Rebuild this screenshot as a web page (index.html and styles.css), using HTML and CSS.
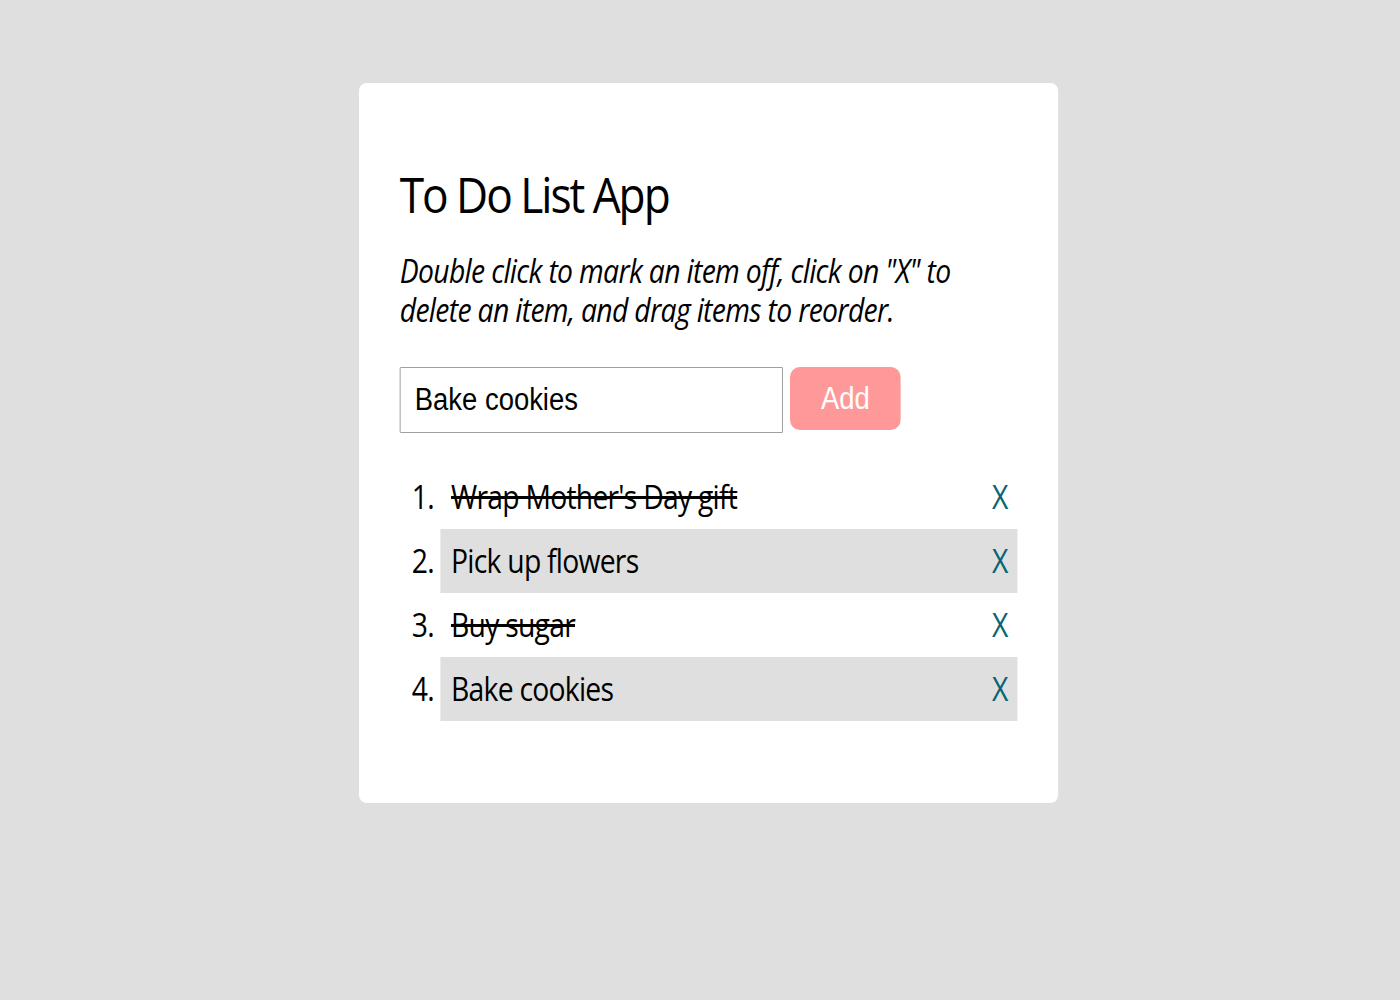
FILE: index.html
```html
<!DOCTYPE html>
<html>
<head>
<meta charset="utf-8">
<link rel="stylesheet" href="styles.css">
</head>
<body>
<main class="card">
  <h1 class="title">To Do List App</h1>
  <p class="hint">Double click to mark an item off, click on "X" to delete an item, and drag items to reorder.</p>
  <form class="add-form">
    <input class="add-input" type="text" value="Bake cookies">
    <button class="add-btn" type="button">Add</button>
  </form>
  <ol class="todo-list">
    <li class="todo done"><span class="todo-x">X</span><span class="todo-text">Wrap Mother's Day gift</span></li>
    <li class="todo shaded"><span class="todo-x">X</span><span class="todo-text">Pick up flowers</span></li>
    <li class="todo done"><span class="todo-x">X</span><span class="todo-text">Buy sugar</span></li>
    <li class="todo shaded"><span class="todo-x">X</span><span class="todo-text">Bake cookies</span></li>
  </ol>
</main>
</body>
</html>
```
FILE: styles.css
```css
html, body {
  margin: 0;
  padding: 0;
}
body {
  background: #dfdfdf;
  font-family: "Open Sans", "DejaVu Sans", sans-serif;
  color: #000;
}
/* the reference is horizontally compressed; the card is laid out at full
   width and squeezed to 88.5% along x */
.card {
  box-sizing: border-box;
  width: 790px;
  height: 720px;
  margin: 83px 0 0 359px;
  background: #fff;
  border-radius: 9px / 8px;
  padding: 69px 46px 0 46px;
  transform: scaleX(0.885);
  transform-origin: 0 0;
}
.title {
  margin: 0;
  font-size: 50px;
  font-weight: 400;
  line-height: 84px;
  letter-spacing: -2.3px;
}
.hint {
  margin: 15px 0 0 0;
  font-style: italic;
  font-size: 32px;
  line-height: 39px;
  letter-spacing: -0.75px;
}
.add-form {
  display: flex;
  gap: 8px;
  margin-top: 38px;
  align-items: flex-start;
}
.add-input {
  box-sizing: border-box;
  width: 433px;
  height: 66px;
  border: 1px solid #999;
  border-radius: 1px;
  padding: 0 16px;
  font-family: "Liberation Sans", Arial, sans-serif;
  font-size: 31px;
  color: #000;
  outline: none;
}
.add-btn {
  width: 125px;
  height: 63px;
  border: none;
  border-radius: 11px / 10px;
  background: #ff9999;
  color: #fff;
  font-family: "Liberation Sans", Arial, sans-serif;
  font-size: 31px;
}
.todo-list {
  margin: 32px 0 0 0;
  padding: 0 0 0 46px;
  font-size: 32px;
  letter-spacing: -0.85px;
}
.todo {
  height: 64px;
  line-height: 64px;
  padding: 0 11px 0 12px;
}
.shaded {
  background: #dfdfdf;
}
.done .todo-text {
  text-decoration: line-through;
}
.todo-x {
  float: right;
  color: #086470;
}
```
